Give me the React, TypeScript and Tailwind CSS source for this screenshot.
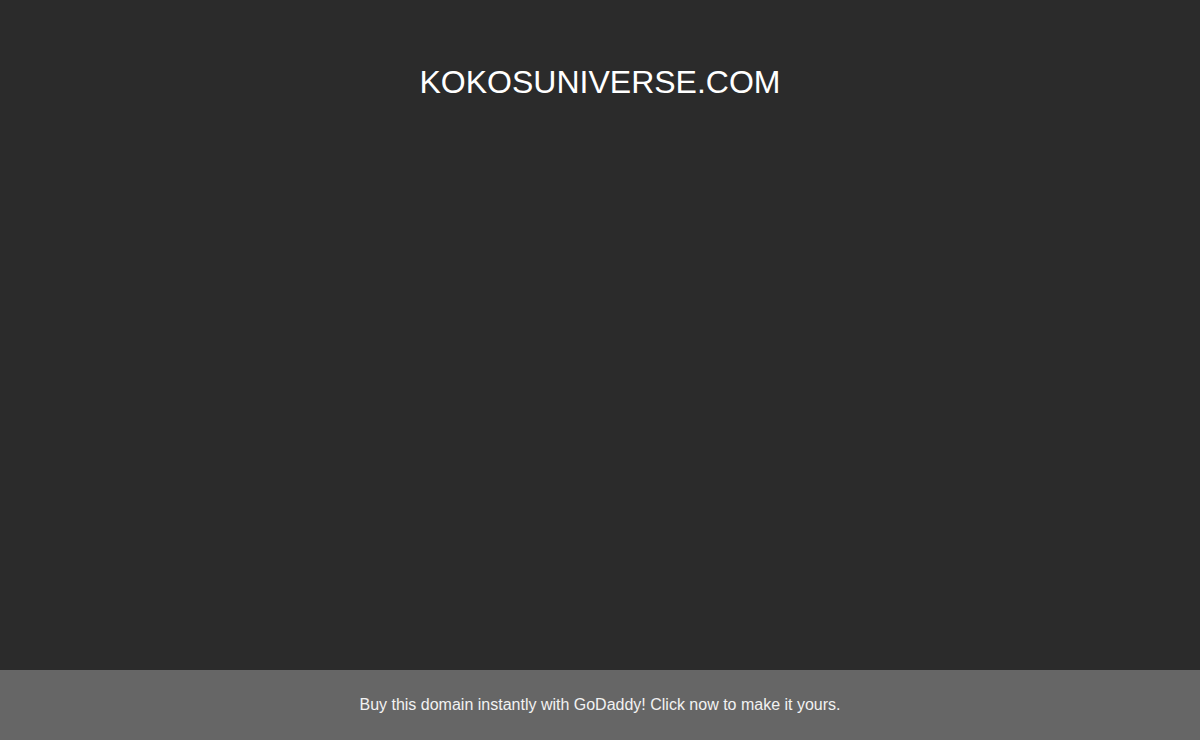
export default function App() {
  return (
    <div
      className="flex h-screen flex-col bg-[#2b2b2b] text-white"
      style={{ fontFamily: '"Liberation Sans", Arial, sans-serif' }}
    >
      <h1 className="pt-[64px] text-center text-[32px] font-normal leading-[37px]">
        KOKOSUNIVERSE.COM
      </h1>
      <div className="flex-1" />
      <div className="flex h-[70px] items-center justify-center bg-[#666666] text-[16px] text-[#f2f2f2]">
        Buy this domain instantly with GoDaddy! Click now to make it yours.
      </div>
    </div>
  );
}
